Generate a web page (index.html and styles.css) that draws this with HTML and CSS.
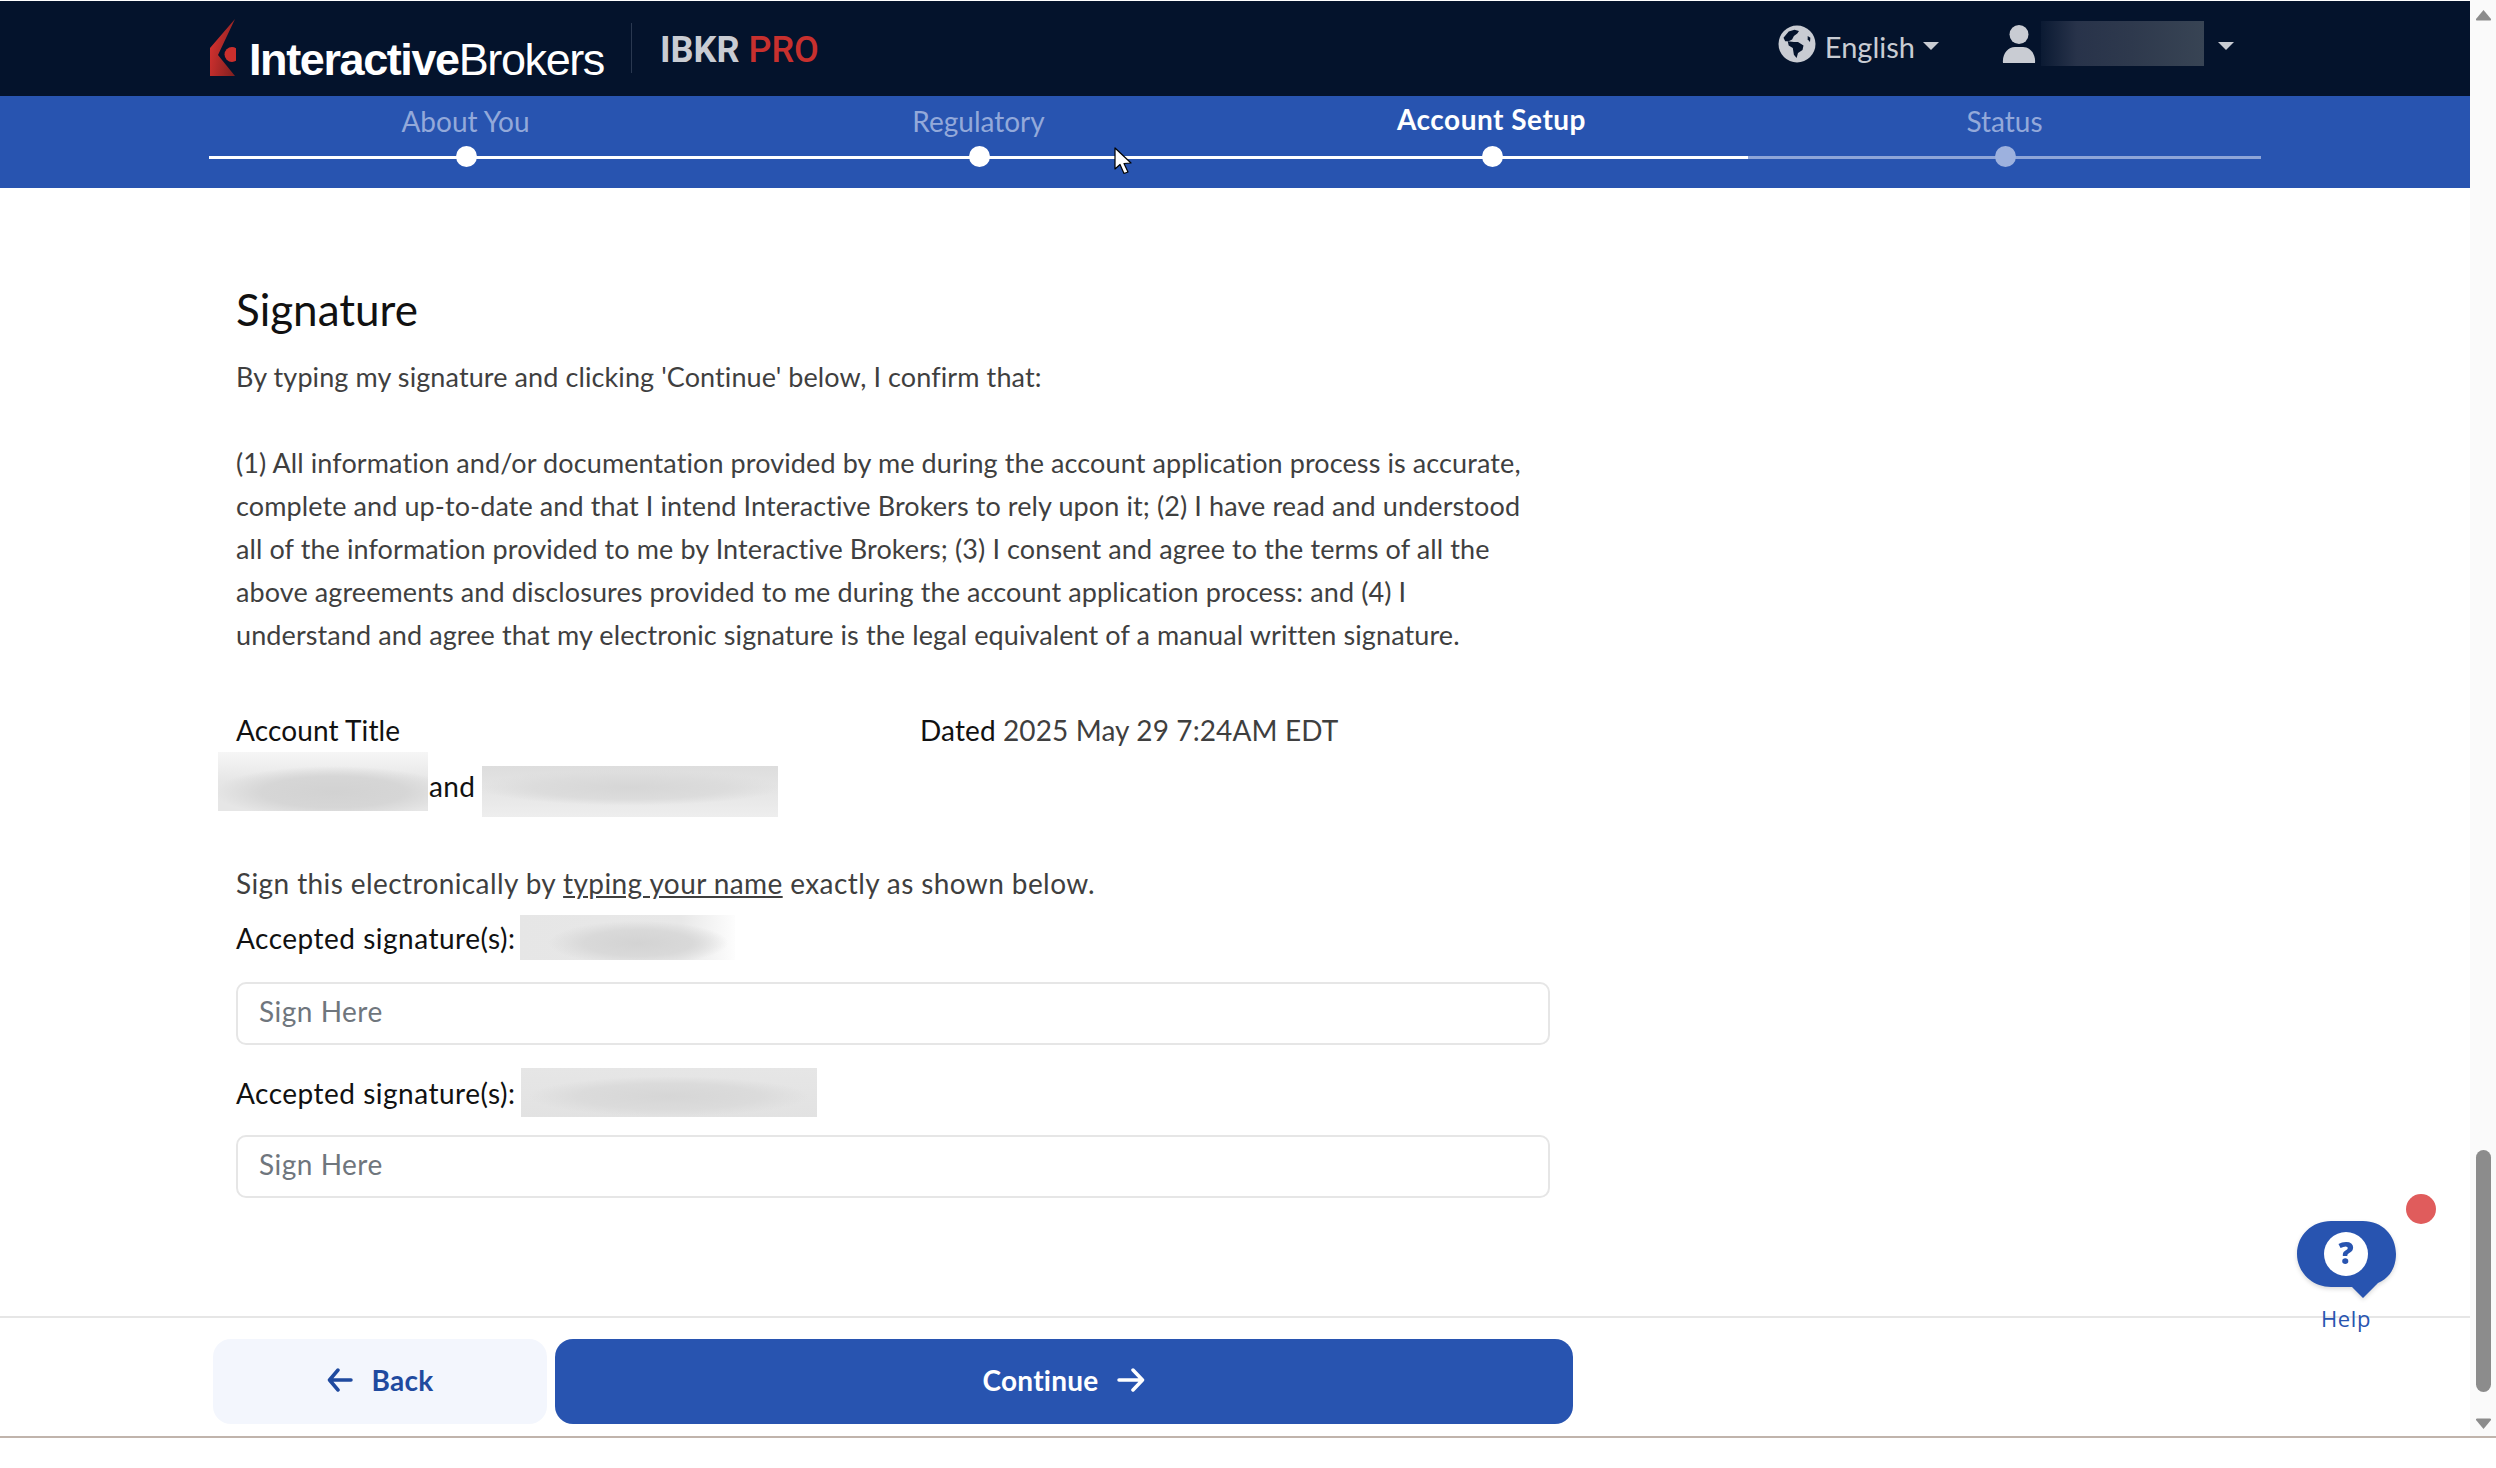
FILE: index.html
```html
<!DOCTYPE html>
<html lang="en">
<head>
<meta charset="utf-8">
<title>IBKR PRO - Signature</title>
<link rel="stylesheet" href="styles.css">
</head>
<body>
<div class="window">
  <div class="main">
    <header class="topbar">
      <svg class="logo-mark" width="26" height="58" viewBox="0 0 26 58">
        <defs><linearGradient id="flame" x1="0" y1="0.55" x2="1" y2="1"><stop offset="0" stop-color="#cf302e"/><stop offset="1" stop-color="#7d1f1f"/></linearGradient></defs>
        <path d="M25 0 L0 29 V57 H25 L12 41 L8 36 Z" fill="url(#flame)"/>
        <circle cx="22" cy="35.500" r="7.500" fill="#cb2f2d"/>
      </svg>
      <div class="logo-text"><b>Interactive</b>Brokers</div>
      <div class="divider"></div>
      <div class="product">IBKR <span class="pro">PRO</span></div>
      <div class="top-actions">
        <svg class="globe" width="38" height="38" viewBox="0 0 38 38">
          <circle cx="19" cy="19" r="18.500" fill="#c9ccd3"/>
          <path d="M5.500 12.800 L10.700 6.500 L16.500 4.800 L21 5.900 L19.300 8.600 L15.900 11 L14.100 14.400 L10.700 16.200 L7.200 16.200 Z" fill="#04132c"/>
          <path d="M9.700 16.200 L15.900 16.900 L20 16.900 L25.500 20.400 L24.500 24.900 L20 28 L18.600 33 L15.900 29.800 L14.800 22.900 L10.700 20.400 Z" fill="#04132c"/>
          <path d="M29.700 11 L32.400 12.800 L32 17 L29.700 14.500 Z" fill="#04132c"/>
        </svg>
        <span class="lang">English</span>
        <span class="caret"></span>
        <svg class="user" width="34" height="38" viewBox="0 0 34 38">
          <circle cx="17" cy="9.500" r="9.500" fill="#c9ccd3"/>
          <path d="M1 38 C0 29 6 22 13 22 H21 C28 22 34 29 33 38 Z" fill="#c9ccd3"/>
        </svg>
        <div class="user-name"></div>
        <span class="caret caret-user"></span>
      </div>
    </header>
    <nav class="stepper">
      <div class="step"><span class="step-label">About You</span><span class="dot"></span></div>
      <div class="step"><span class="step-label">Regulatory</span><span class="dot"></span></div>
      <div class="step step-current"><span class="step-label">Account Setup</span><span class="dot"></span></div>
      <div class="step step-todo"><span class="step-label">Status</span><span class="dot"></span></div>
    </nav>
    <main class="content">
      <h1 class="title">Signature</h1>
      <p class="legal">By typing my signature and clicking 'Continue' below, I confirm that:<br><br>(1) All information and/or documentation provided by me during the account application process is accurate,<br>complete and up-to-date and that I intend Interactive Brokers to rely upon it; (2) I have read and understood<br>all of the information provided to me by Interactive Brokers; (3) I consent and agree to the terms of all the<br>above agreements and disclosures provided to me during the account application process: and (4) I<br>understand and agree that my electronic signature is the legal equivalent of a manual written signature.</p>
      <div class="meta">
        <div class="strong">Account Title</div>
        <div class="strong">Dated <span class="date">2025 May 29 7:24AM EDT</span></div>
      </div>
      <div class="names">
        <div class="blur blur-holder-a"></div>
        <span class="names-and strong">and</span>
        <div class="blur blur-holder-b"></div>
      </div>
      <p class="instruction">Sign this electronically by <u>typing your name</u> exactly as shown below.</p>
      <div class="accepted accepted-a"><span class="strong">Accepted signature(s):</span><div class="blur blur-sig-a"></div></div>
      <input class="sign sign-a" type="text" placeholder="Sign Here">
      <div class="accepted accepted-b"><span class="strong">Accepted signature(s):</span><div class="blur blur-sig-b"></div></div>
      <input class="sign sign-b" type="text" placeholder="Sign Here">
    </main>
    <footer class="actions">
      <button class="btn btn-back" type="button">
        <svg width="26" height="24" viewBox="0 0 26 24"><path d="M24 12 H3 M11 2 L2.500 12 L11 22" fill="none" stroke="#1f4a9f" stroke-width="3.500" stroke-linecap="round" stroke-linejoin="round"/></svg>
        Back
      </button>
      <button class="btn btn-continue" type="button">
        Continue
        <svg width="28" height="24" viewBox="0 0 28 24"><path d="M2 12 H25 M16 2 L25.500 12 L16 22" fill="none" stroke="#fff" stroke-width="3.500" stroke-linecap="round" stroke-linejoin="round"/></svg>
      </button>
    </footer>
    <div class="help">
      <span class="help-badge"></span>
      <svg class="help-bubble" width="100" height="79" viewBox="0 0 100 79">
        <path d="M34 1 H66 C85 1 99 15 99 34 C99 47 93 58 81 63 L66 78 L55 67 H34 C15 67 0 52 0 34 C0 15 15 1 34 1 Z" fill="#2854b0"/>
        <circle cx="49" cy="34" r="22" fill="#fff"/>
        <text class="help-q" x="49" y="44" text-anchor="middle">?</text>
      </svg>
      <span class="help-label">Help</span>
    </div>
    <svg class="cursor" width="20" height="29" viewBox="0 0 20 29">
      <path d="M1 1 V22 L6 17.500 L10 26.500 L14 25 L10 16.500 L17 16 Z" fill="#fff" stroke="#000" stroke-width="1.200" stroke-linejoin="round"/>
    </svg>
  </div>
  <aside class="scrollbar">
    <svg class="sb-arrow" width="17" height="12" viewBox="0 0 17 12"><path d="M8.500 1 L16 10 Q16.500 11.500 15 11.500 H2 Q0.500 11.500 1 10 Z" fill="#8c8c8c"/></svg>
    <div class="sb-thumb"></div>
    <svg class="sb-arrow" width="17" height="12" viewBox="0 0 17 12"><path d="M8.500 11 L16 2 Q16.500 0.500 15 0.500 H2 Q0.500 0.500 1 2 Z" fill="#8c8c8c"/></svg>
  </aside>
</div>
<div class="screen-edge"></div>
</body>
</html>
```
FILE: styles.css
```css
* { box-sizing: border-box; }
html, body { margin: 0; padding: 0; }
body {
  width: 2496px;
  height: 1468px;
  overflow: hidden;
  background: #fff;
  font-family: "Lato", "Liberation Sans", sans-serif;
  color: #3d3d3d;
}
.window { display: flex; height: 1436px; }
.main { position: relative; width: 2470px; display: flex; flex-direction: column; padding-top: 1px; }
.screen-edge { height: 2px; background: #c0b4ac; }

.topbar { height: 95px; flex: none; background: #04132c; display: flex; align-items: center; padding: 0 236px 0 210px; }
.logo-mark { margin-top: -1px; flex: none; }
.logo-text { margin-left: 13px; margin-top: 22px; font-family: "Liberation Sans", sans-serif; font-size: 45px; letter-spacing: -1.400px; color: #fff; white-space: nowrap; width: 363px; }
.divider { width: 1px; height: 50px; background: #2a3850; margin-left: 19px; margin-top: -2px; }
.product { margin-left: 28px; margin-top: 2px; font-family: "Roboto", sans-serif; font-size: 36px; font-weight: 700; color: #c9ccd3; white-space: nowrap; }
.pro { color: #c8302e; font-weight: 500; }
.top-actions { margin-left: auto; display: flex; align-items: center; margin-top: -10px; }
.lang { margin-left: 9px; margin-top: 6px; font-size: 29px; color: #c9ccd3; }
.caret { width: 0; height: 0; margin-left: 8px; margin-top: 5px; border-left: 8px solid transparent; border-right: 8px solid transparent; border-top: 8px solid #c9ccd3; }
.user { margin-left: 63px; }
.user-name { width: 163px; height: 45px; margin-left: 5px; background: linear-gradient(90deg, #0b1a33 0%, #28334a 22%, #2e394d 55%, #384454 100%); }
.caret-user { margin-left: 14px; }

.stepper { height: 92px; flex: none; margin-left: 0; padding: 0 209px; background: #2854b0; display: grid; grid-template-columns: repeat(4, 513px); }
.step { position: relative; display: flex; flex-direction: column; align-items: center; border-bottom: 0; }
.step::after { content: ""; position: absolute; left: 0; right: 0; top: 60px; height: 3px; background: #fff; }
.step-label { height: 50px; line-height: 50px; font-size: 28px; color: #93a9da; }
.dot { position: relative; z-index: 1; margin: 0 0 0 2px; width: 21px; height: 21px; border-radius: 50%; background: #fff; }
.step-current .step-label { color: #fff; font-weight: 700; line-height: 46px; letter-spacing: 0.500px; }
.step-todo::after { background: #8ea5d8; }
.step-todo .dot { background: #9db1de; }

.content { flex: 1; min-height: 0; padding: 96px 0 0 236px; }
.title { margin: 0; height: 50px; line-height: 50px; font-size: 44px; font-weight: 400; color: #111; }
.legal { margin: 21px 0 0; font-size: 27px; line-height: 43px; letter-spacing: 0.100px; color: #3f3f3f; white-space: nowrap; }
.strong { color: #111; }
.meta { margin-top: 54px; display: grid; grid-template-columns: 684px 1fr; font-size: 28px; line-height: 40px; letter-spacing: 0.120px; }
.date { color: #3f3f3f; }
.names { display: flex; align-items: flex-start; margin: 2px 0 0 -18px; height: 65px; font-size: 28px; line-height: 40px; }
.names-and { width: 54px; margin-top: 14px; padding-left: 1px; letter-spacing: 0.300px; }
.blur { flex: none; }
.blur-holder-a { width: 210px; height: 59px; background: radial-gradient(ellipse 120px 26px at 55% 68%, #d2d2d2 0%, #d6d6d6 60%, rgba(214,214,214,0) 100%), linear-gradient(180deg, #f6f6f6 0%, #e6e6e6 50%, #e6e6e6 100%); }
.blur-holder-b { width: 296px; height: 51px; margin-top: 14px; background: radial-gradient(ellipse 150px 18px at 50% 42%, #d6d6d6 0%, #dcdcdc 65%, rgba(220,220,220,0) 100%), linear-gradient(180deg, #dddddd 0%, #eeeeee 100%); }
.instruction { margin: 46px 0 0; font-size: 28px; line-height: 40px; letter-spacing: 0.400px; color: #3f3f3f; white-space: nowrap; }
.accepted { display: flex; align-items: center; font-size: 28px; line-height: 40px; letter-spacing: 0.500px; white-space: nowrap; }
.accepted-a { margin-top: 12px; height: 45px; }
.accepted-b { margin-top: 23px; height: 49px; }
.blur-sig-a { width: 215px; height: 45px; margin-left: 5px; background: radial-gradient(ellipse 90px 22px at 55% 62%, #d3d3d3 0%, #d9d9d9 60%, rgba(217,217,217,0) 100%), linear-gradient(90deg, #e6e6e6 0%, #e8e8e8 75%, #fdfdfd 100%); }
.blur-sig-b { width: 296px; height: 49px; margin-left: 6px; background: radial-gradient(ellipse 140px 20px at 50% 58%, #d6d6d6 0%, #dbdbdb 65%, rgba(219,219,219,0) 100%), linear-gradient(180deg, #e6e6e6 0%, #e2e2e2 100%); }
.sign { display: block; width: 1314px; height: 63px; padding: 0 21px 6px; border: 2px solid #e6e6e6; border-radius: 10px; background: #fff; font-family: inherit; font-size: 28px; letter-spacing: 0.500px; color: #333; outline: none; }
.sign::placeholder { color: #6f767d; opacity: 1; }
.sign-a { margin-top: 22px; }
.sign-b { margin-top: 18px; }

.actions { height: 120px; flex: none; border-top: 2px solid #e6e6e6; padding: 21px 0 0 213px; display: flex; align-items: flex-start; gap: 8px; }
.btn { height: 85px; border: 0; border-radius: 18px; display: flex; align-items: center; justify-content: center; gap: 19px; font-family: inherit; font-size: 28px; font-weight: 700; letter-spacing: 0.250px; padding: 0 0 3px; }
.btn-back { width: 334px; background: #f3f6fd; color: #1f4a9f; }
.btn-continue { width: 1018px; background: #2854b0; color: #fff; }

.help { position: absolute; left: 2296px; top: 1190px; width: 140px; height: 145px; }
.help-badge { position: absolute; left: 110px; top: 4px; width: 30px; height: 30px; border-radius: 50%; background: #e05c5c; }
.help-bubble { position: absolute; left: 1px; top: 30px; filter: drop-shadow(0 2px 2px rgba(0,0,0,.15)); }
.help-q { font-family: "Open Sans", sans-serif; font-size: 30px; font-weight: 800; fill: #2854b0; }
.help-label { position: absolute; left: 0; top: 113px; width: 100px; text-align: center; font-family: "Open Sans", sans-serif; font-size: 22px; letter-spacing: 0.600px; line-height: 30px; color: #2854b0; }

.cursor { position: absolute; left: 1114px; top: 147px; }

.scrollbar { width: 26px; background: #fafafa; display: flex; flex-direction: column; align-items: center; padding: 9px 0 6px; }
.sb-arrow { flex: none; }
.sb-thumb { margin-top: auto; margin-bottom: 26px; width: 15px; height: 242px; border-radius: 8px; background: #8c8c8c; }
```
